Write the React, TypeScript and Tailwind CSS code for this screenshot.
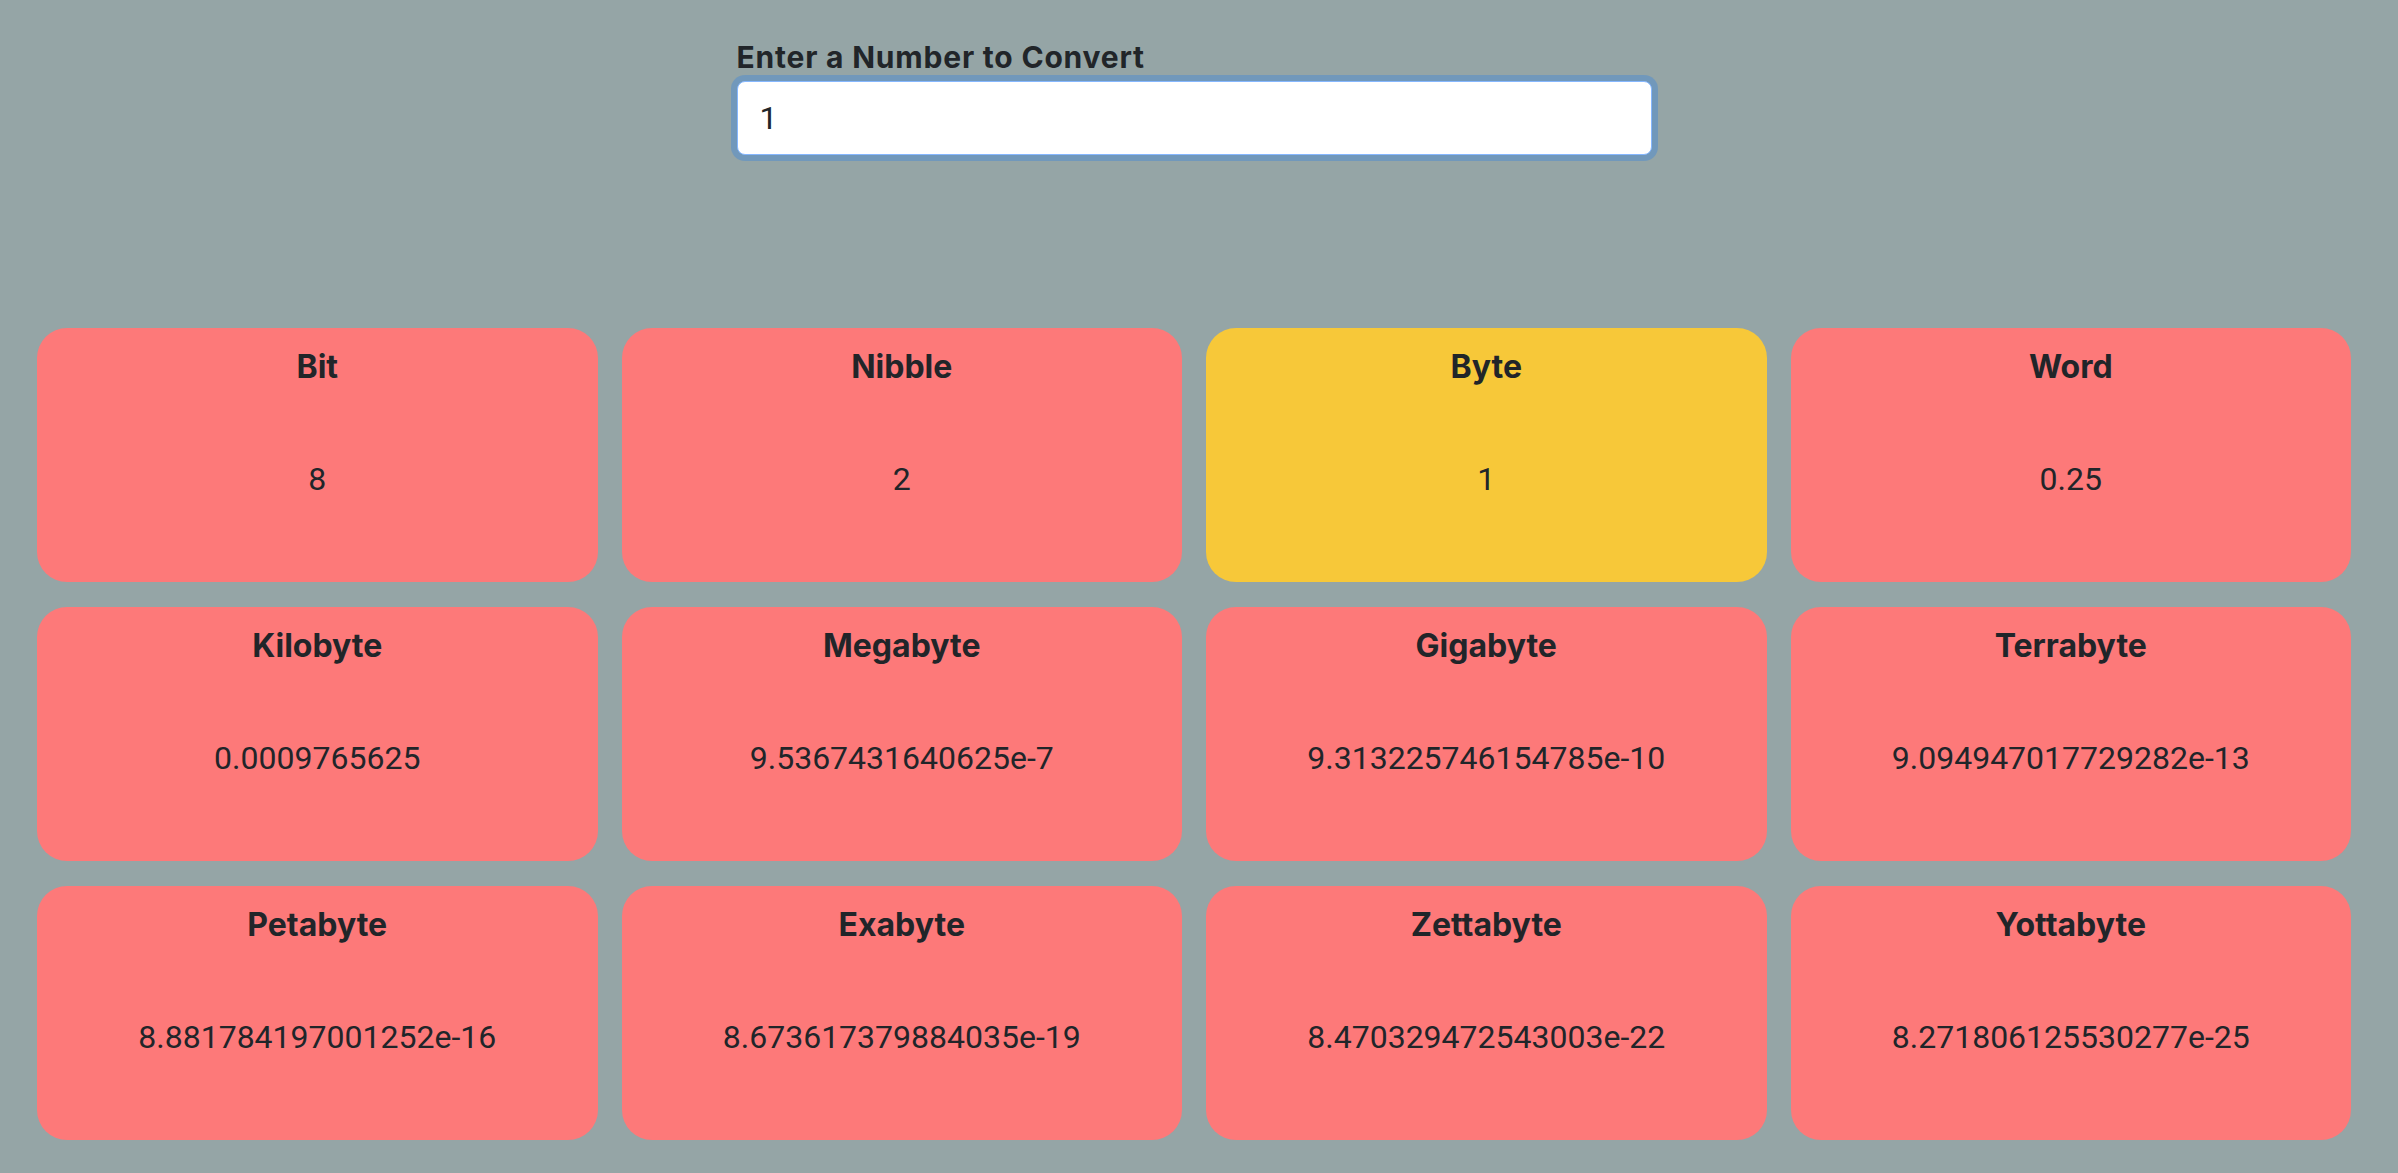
import React, { useState } from "react";

const UNITS: { name: string; bytes: number }[] = [
  { name: "Bit", bytes: 1 / 8 },
  { name: "Nibble", bytes: 1 / 2 },
  { name: "Byte", bytes: 1 },
  { name: "Word", bytes: 4 },
  { name: "Kilobyte", bytes: 1024 },
  { name: "Megabyte", bytes: Math.pow(1024, 2) },
  { name: "Gigabyte", bytes: Math.pow(1024, 3) },
  { name: "Terrabyte", bytes: Math.pow(1024, 4) },
  { name: "Petabyte", bytes: Math.pow(1024, 5) },
  { name: "Exabyte", bytes: Math.pow(1024, 6) },
  { name: "Zettabyte", bytes: Math.pow(1024, 7) },
  { name: "Yottabyte", bytes: Math.pow(1024, 8) },
];

export default function App() {
  const [value, setValue] = useState("1");
  const selected = "Byte";
  const num = parseFloat(value);
  const base = UNITS.find((u) => u.name === selected)!.bytes;

  return (
    <div className="min-h-screen bg-[#95a5a6] pl-[37px] pr-[47px] pt-[40px] pb-[31px] font-['Roboto','Liberation_Sans',sans-serif] text-[#212529]">
      <div className="mx-auto w-[915px]">
        <label className="mb-[7px] block font-['Inter','Roboto',sans-serif] text-[30px] font-bold leading-[34px] tracking-[0.8px]">
          Enter a Number to Convert
        </label>
        <input
          value={value}
          onChange={(e) => setValue(e.target.value)}
          className="block h-[74px] w-full rounded-[8px] border border-[#86b7fe] bg-white px-[22px] font-['Roboto','Liberation_Sans',sans-serif] text-[32px] text-[#212529] shadow-[0_0_0_6px_rgba(84,142,204,0.55)] outline-none"
        />
      </div>
      <div className="mt-[173px] grid grid-cols-4 gap-x-6 gap-y-[25px]">
        {UNITS.map((u) => {
          const v = isNaN(num) ? "" : String((num * base) / u.bytes);
          const active = u.name === selected;
          return (
            <div
              key={u.name}
              className={
                "flex h-[254px] flex-col items-center rounded-[30px] pt-[15px] text-center " +
                (active ? "bg-[#f7c839]" : "bg-[#fd7979]")
              }
            >
              <div className="font-['Inter','Roboto',sans-serif] text-[32px] font-bold leading-[48px]">
                {u.name}
              </div>
              <div className="mt-[64px] text-[32px] leading-[48px]">{v}</div>
            </div>
          );
        })}
      </div>
    </div>
  );
}
